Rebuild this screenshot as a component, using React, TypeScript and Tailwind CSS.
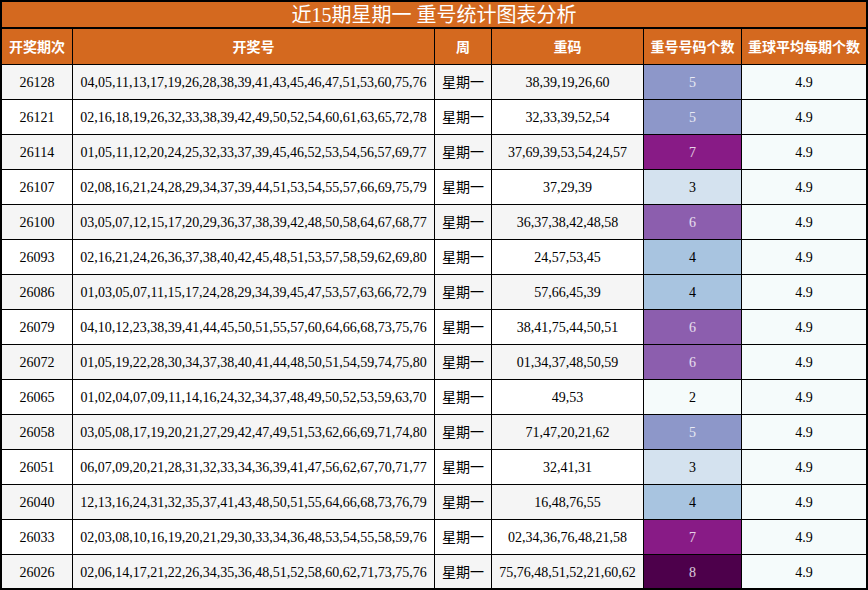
const rows: [string,string,string,number][] = [
["26128","04,05,11,13,17,19,26,28,38,39,41,43,45,46,47,51,53,60,75,76","38,39,19,26,60",5],
["26121","02,16,18,19,26,32,33,38,39,42,49,50,52,54,60,61,63,65,72,78","32,33,39,52,54",5],
["26114","01,05,11,12,20,24,25,32,33,37,39,45,46,52,53,54,56,57,69,77","37,69,39,53,54,24,57",7],
["26107","02,08,16,21,24,28,29,34,37,39,44,51,53,54,55,57,66,69,75,79","37,29,39",3],
["26100","03,05,07,12,15,17,20,29,36,37,38,39,42,48,50,58,64,67,68,77","36,37,38,42,48,58",6],
["26093","02,16,21,24,26,36,37,38,40,42,45,48,51,53,57,58,59,62,69,80","24,57,53,45",4],
["26086","01,03,05,07,11,15,17,24,28,29,34,39,45,47,53,57,63,66,72,79","57,66,45,39",4],
["26079","04,10,12,23,38,39,41,44,45,50,51,55,57,60,64,66,68,73,75,76","38,41,75,44,50,51",6],
["26072","01,05,19,22,28,30,34,37,38,40,41,44,48,50,51,54,59,74,75,80","01,34,37,48,50,59",6],
["26065","01,02,04,07,09,11,14,16,24,32,34,37,48,49,50,52,53,59,63,70","49,53",2],
["26058","03,05,08,17,19,20,21,27,29,42,47,49,51,53,62,66,69,71,74,80","71,47,20,21,62",5],
["26051","06,07,09,20,21,28,31,32,33,34,36,39,41,47,56,62,67,70,71,77","32,41,31",3],
["26040","12,13,16,24,31,32,35,37,41,43,48,50,51,55,64,66,68,73,76,79","16,48,76,55",4],
["26033","02,03,08,10,16,19,20,21,29,30,33,34,36,48,53,54,55,58,59,76","02,34,36,76,48,21,58",7],
["26026","02,06,14,17,21,22,26,34,35,36,48,51,52,58,60,62,71,73,75,76","75,76,48,51,52,21,60,62",8],
];
const cc: Record<number,string> = {
  2:"bg-[#f5fbfb] text-black",3:"bg-[#d4e2ef] text-black",4:"bg-[#a8c4e0] text-black",
  5:"bg-[#8d97c9] text-white/80",6:"bg-[#8c5eae] text-white/80",7:"bg-[#881b86] text-white/80",8:"bg-[#4d004b] text-white/80",
};
const F = {fontFamily:'"Liberation Serif","Noto Sans CJK SC",serif'};
export default function App(){
  const cols = "grid grid-cols-[71px_362px_57px_152px_98px_1fr]";
  return <div className="w-[868px] h-[590px] bg-white border-2 border-black overflow-hidden text-[14px]" style={F}>
    <div className="h-[27px] bg-[#d4691f] text-white text-[20px] flex items-center justify-center border-b-2 border-black leading-none">近15期星期一 重号统计图表分析</div>
    <div className={cols+" h-[35px] bg-[#d4691f] text-white font-bold"} style={{fontFamily:'"Noto Sans CJK SC",sans-serif'}}>
      {["开奖期次","开奖号","周","重码","重号号码个数","重球平均每期个数"].map((h,i)=>
        <div key={i} className={"flex items-center justify-center text-[14px] border-black "+(i<5?"border-r":"")}>{h}</div>)}
    </div>
    {rows.map((r,i)=>{
      const bg = i%2===0?"bg-[#f5f5f5]":"bg-white";
      return <div key={i} className={cols+" h-[35px] border-t border-black "+bg}>
        <div className="flex items-center justify-center border-r border-black">{r[0]}</div>
        <div className="flex items-center justify-center border-r border-black">{r[1]}</div>
        <div className="flex items-center justify-center border-r border-black">星期一</div>
        <div className="flex items-center justify-center border-r border-black">{r[2]}</div>
        <div className={"flex items-center justify-center border-r border-black "+cc[r[3]]}>{r[3]}</div>
        <div className="flex items-center justify-center bg-[#f5fbfb]">4.9</div>
      </div>;
    })}
  </div>;
}
